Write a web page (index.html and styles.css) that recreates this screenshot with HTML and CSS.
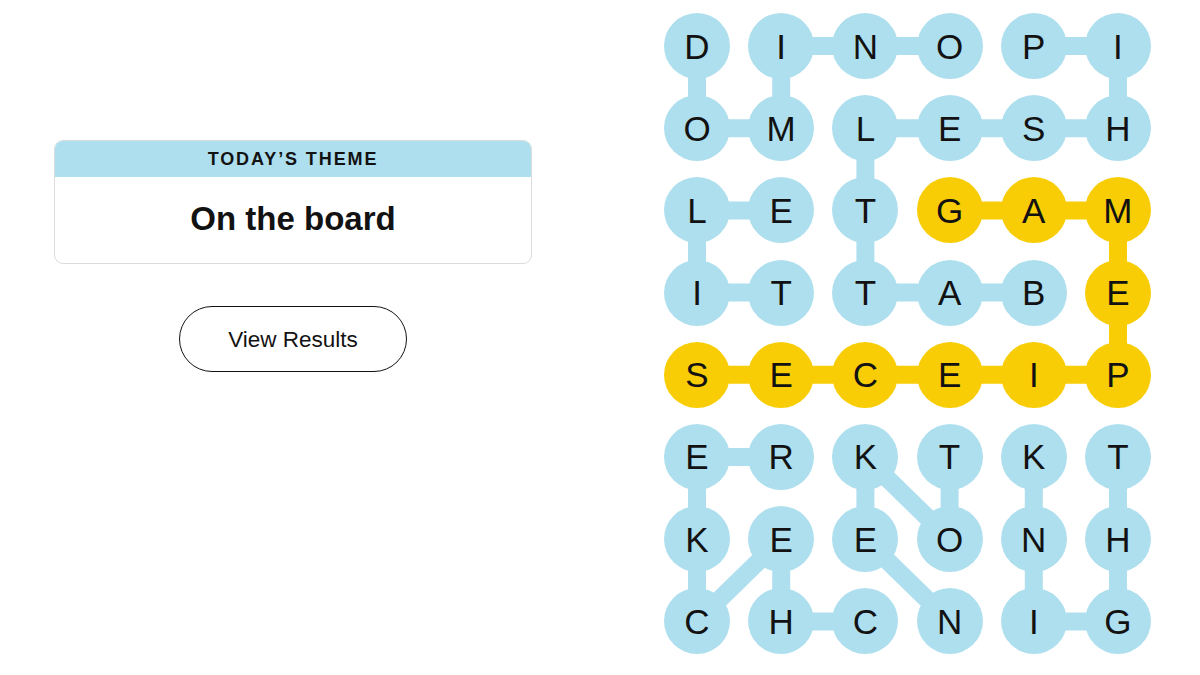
FILE: index.html
```html
<!DOCTYPE html>
<html>
<head>
<meta charset="utf-8">
<link rel="stylesheet" href="styles.css">
</head>
<body>
<div class="page">
  <section class="left">
    <div class="theme-card">
      <div class="theme-head">TODAY’S THEME</div>
      <div class="theme-body">On the board</div>
    </div>
    <button class="results-btn">View Results</button>
  </section>
  <section class="board">
    <svg class="links" width="488" height="642" viewBox="0 0 488 642">
      <g stroke="#aedfee" stroke-width="18" stroke-linecap="butt">
        <line x1="33" y1="33" x2="33" y2="115.2"/>
        <line x1="117.2" y1="33" x2="201.4" y2="33"/>
        <line x1="117.2" y1="33" x2="117.2" y2="115.2"/>
        <line x1="201.4" y1="33" x2="285.6" y2="33"/>
        <line x1="369.8" y1="33" x2="454" y2="33"/>
        <line x1="454" y1="33" x2="454" y2="115.2"/>
        <line x1="33" y1="115.2" x2="117.2" y2="115.2"/>
        <line x1="201.4" y1="115.2" x2="454" y2="115.2"/>
        <line x1="201.4" y1="115.2" x2="201.4" y2="197.4"/>
        <line x1="33" y1="197.4" x2="117.2" y2="197.4"/>
        <line x1="33" y1="197.4" x2="33" y2="279.6"/>
        <line x1="201.4" y1="197.4" x2="201.4" y2="279.6"/>
        <line x1="33" y1="279.6" x2="117.2" y2="279.6"/>
        <line x1="201.4" y1="279.6" x2="369.8" y2="279.6"/>
        <line x1="33" y1="444" x2="117.2" y2="444"/>
        <line x1="33" y1="444" x2="33" y2="608.4"/>
        <line x1="201.4" y1="444" x2="201.4" y2="526.2"/>
        <line x1="201.4" y1="444" x2="285.6" y2="526.2"/>
        <line x1="285.6" y1="444" x2="285.6" y2="526.2"/>
        <line x1="369.8" y1="444" x2="369.8" y2="608.4"/>
        <line x1="454" y1="444" x2="454" y2="608.4"/>
        <line x1="117.2" y1="526.2" x2="33" y2="608.4"/>
        <line x1="117.2" y1="526.2" x2="117.2" y2="608.4"/>
        <line x1="201.4" y1="526.2" x2="285.6" y2="608.4"/>
        <line x1="117.2" y1="608.4" x2="201.4" y2="608.4"/>
        <line x1="369.8" y1="608.4" x2="454" y2="608.4"/>
      </g>
      <g stroke="#f8cd05" stroke-width="18">
        <line x1="285.6" y1="197.4" x2="454" y2="197.4"/>
        <line x1="454" y1="197.4" x2="454" y2="361.8"/>
        <line x1="33" y1="361.8" x2="454" y2="361.8"/>
      </g>
    </svg>
    <div class="grid">
      <span class="cell">D</span><span class="cell">I</span><span class="cell">N</span><span class="cell">O</span><span class="cell">P</span><span class="cell">I</span>
      <span class="cell">O</span><span class="cell">M</span><span class="cell">L</span><span class="cell">E</span><span class="cell">S</span><span class="cell">H</span>
      <span class="cell">L</span><span class="cell">E</span><span class="cell">T</span><span class="cell gold">G</span><span class="cell gold">A</span><span class="cell gold">M</span>
      <span class="cell">I</span><span class="cell">T</span><span class="cell">T</span><span class="cell">A</span><span class="cell">B</span><span class="cell gold">E</span>
      <span class="cell gold">S</span><span class="cell gold">E</span><span class="cell gold">C</span><span class="cell gold">E</span><span class="cell gold">I</span><span class="cell gold">P</span>
      <span class="cell">E</span><span class="cell">R</span><span class="cell">K</span><span class="cell">T</span><span class="cell">K</span><span class="cell">T</span>
      <span class="cell">K</span><span class="cell">E</span><span class="cell">E</span><span class="cell">O</span><span class="cell">N</span><span class="cell">H</span>
      <span class="cell">C</span><span class="cell">H</span><span class="cell">C</span><span class="cell">N</span><span class="cell">I</span><span class="cell">G</span>
    </div>
  </section>
</div>
</body>
</html>
```
FILE: styles.css
```css
html, body {
  margin: 0;
  padding: 0;
  background: #ffffff;
}
body {
  font-family: "Liberation Sans", Arial, sans-serif;
  color: #121212;
}
.page {
  display: flex;
  width: 1200px;
  height: 675px;
  overflow: hidden;
}
.left {
  width: 478px;
  margin-left: 54px;
  padding-top: 140px;
  display: flex;
  flex-direction: column;
  align-items: center;
}
.theme-card {
  border: 1px solid #dcdcdc;
  border-radius: 9px;
  overflow: hidden;
  box-sizing: border-box;
  width: 478px;
}
.theme-head {
  background: #aedfee;
  height: 36px;
  display: flex;
  align-items: center;
  justify-content: center;
  font-size: 18px;
  font-weight: 700;
  letter-spacing: 1.9px;
  padding-top: 1px;
  box-sizing: border-box;
}
.theme-body {
  height: 86px;
  display: flex;
  align-items: center;
  justify-content: center;
  font-size: 33px;
  font-weight: 700;
  padding-bottom: 3px;
  box-sizing: border-box;
}
.results-btn {
  margin-top: 42px;
  width: 228px;
  height: 66px;
  border: 1.5px solid #121212;
  border-radius: 33px;
  background: #fff;
  font-family: "Liberation Sans", Arial, sans-serif;
  font-size: 22.5px;
  color: #121212;
  padding: 2px 0 0 0;
}
.board {
  position: relative;
  margin-left: 132px;
  margin-top: 13px;
  width: 488px;
  height: 642px;
}
.links {
  position: absolute;
  left: 0;
  top: 0;
}
.grid {
  position: relative;
  display: grid;
  grid-template-columns: repeat(6, 66px);
  grid-auto-rows: 66px;
  column-gap: 18.2px;
  row-gap: 16.2px;
}
.cell {
  width: 66px;
  height: 66px;
  border-radius: 50%;
  background: #aedfee;
  display: flex;
  align-items: center;
  justify-content: center;
  font-size: 35px;
  color: #121212;
  padding-top: 1px;
  box-sizing: border-box;
}
.cell.gold {
  background: #f8cd05;
}
```
